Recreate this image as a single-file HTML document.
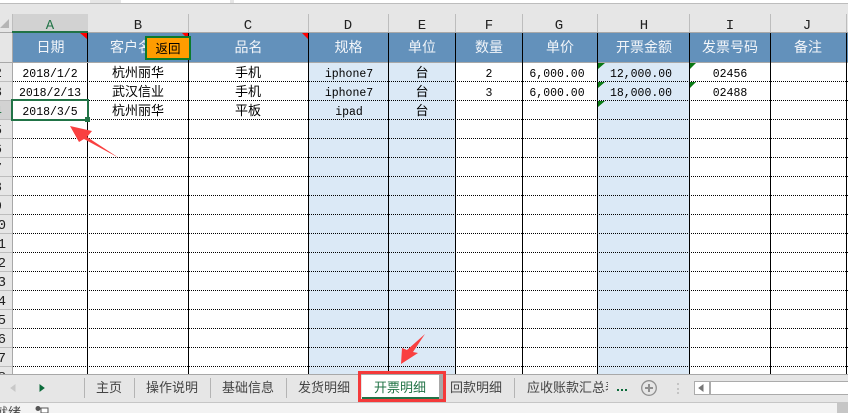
<!DOCTYPE html>
<html><head><meta charset="utf-8">
<style>
html,body{margin:0;padding:0;background:#fff;width:848px;height:413px;overflow:hidden}
svg{display:block}
.m{font-family:"Liberation Mono","WenQuanYi Zen Hei",monospace;font-size:11.5px;fill:#000;text-anchor:middle}
.c{font-family:"Liberation Sans","WenQuanYi Zen Hei","Noto Sans CJK SC",sans-serif;font-size:13px;fill:#000;text-anchor:middle}
.h{font-family:"Liberation Sans","WenQuanYi Zen Hei","Noto Sans CJK SC",sans-serif;font-size:14px;fill:#f2f5f9;text-anchor:middle}
.t{font-family:"Liberation Sans","WenQuanYi Zen Hei","Noto Sans CJK SC",sans-serif;font-size:13px;fill:#444;text-anchor:start}
.l{font-family:"Liberation Mono",monospace;font-size:14px;fill:#222;text-anchor:middle}
.r{font-family:"Liberation Mono",monospace;font-size:14px;fill:#222;text-anchor:end}
</style></head><body>
<svg width="848" height="413" viewBox="0 0 848 413" xmlns="http://www.w3.org/2000/svg" shape-rendering="crispEdges">
<defs><clipPath id="rh"><rect x="0" y="62" width="12" height="312"/></clipPath>
<clipPath id="tabclip"><rect x="510" y="374" width="98" height="28"/></clipPath>
<clipPath id="st"><rect x="0" y="403" width="30" height="10"/></clipPath></defs>
<!-- top strip -->
<rect x="0" y="0" width="848" height="14" fill="#e6e6e6"/>
<rect x="0" y="3" width="848" height="1" fill="#bdbdbd"/>
<rect x="0" y="0" width="90" height="3" fill="#fff"/>
<rect x="121" y="0" width="109" height="3" fill="#fff"/>
<rect x="234" y="0" width="614" height="3" fill="#fff"/>
<!-- col header -->
<rect x="0" y="14" width="848" height="18" fill="#e6e6e6"/>
<rect x="12" y="14" width="76" height="17" fill="#d2d2d2"/>
<polygon points="9,19 9,28 0,28" fill="#b5b5b5" shape-rendering="auto"/>
<g fill="#bdbdbd">
<rect x="12" y="14" width="1" height="18"/><rect x="188" y="14" width="1" height="18"/><rect x="308" y="14" width="1" height="18"/><rect x="388" y="14" width="1" height="18"/><rect x="455" y="14" width="1" height="18"/><rect x="522" y="14" width="1" height="18"/><rect x="597" y="14" width="1" height="18"/><rect x="689" y="14" width="1" height="18"/><rect x="770" y="14" width="1" height="18"/><rect x="846" y="14" width="1" height="18"/>
</g>
<rect x="0" y="32" width="848" height="1" fill="#a8a8a8"/>
<rect x="12" y="31" width="76" height="2" fill="#217346"/>
<text x="50" y="29" class="l" style="fill:#217346">A</text>
<text x="138" y="29" class="l">B</text>
<text x="248" y="29" class="l">C</text>
<text x="348" y="29" class="l">D</text>
<text x="422" y="29" class="l">E</text>
<text x="489" y="29" class="l">F</text>
<text x="559" y="29" class="l">G</text>
<text x="644" y="29" class="l">H</text>
<text x="730" y="29" class="l">I</text>
<text x="807" y="29" class="l">J</text>
<!-- row header -->
<rect x="0" y="33" width="12" height="341" fill="#e6e6e6"/>
<rect x="0" y="100" width="12" height="19" fill="#d2d2d2"/>
<rect x="12" y="33" width="1" height="341" fill="#a8a8a8"/>
<g fill="#bdbdbd">
<rect x="0" y="62" width="12" height="1"/><rect x="0" y="81" width="12" height="1"/><rect x="0" y="100" width="12" height="1"/><rect x="0" y="119" width="12" height="1"/><rect x="0" y="138" width="12" height="1"/><rect x="0" y="157" width="12" height="1"/><rect x="0" y="176" width="12" height="1"/><rect x="0" y="195" width="12" height="1"/><rect x="0" y="214" width="12" height="1"/><rect x="0" y="233" width="12" height="1"/><rect x="0" y="252" width="12" height="1"/><rect x="0" y="271" width="12" height="1"/><rect x="0" y="290" width="12" height="1"/><rect x="0" y="309" width="12" height="1"/><rect x="0" y="328" width="12" height="1"/><rect x="0" y="347" width="12" height="1"/><rect x="0" y="366" width="12" height="1"/>
</g>
<g clip-path="url(#rh)">
<text x="2" y="77" class="r">2</text><text x="2" y="96" class="r">3</text><text x="2" y="115" class="r" style="fill:#217346">4</text><text x="2" y="134" class="r">5</text><text x="2" y="153" class="r">6</text><text x="2" y="172" class="r">7</text><text x="2" y="191" class="r">8</text><text x="2" y="210" class="r">9</text>
<text x="6" y="229" class="r">10</text><text x="6" y="248" class="r">11</text><text x="6" y="267" class="r">12</text><text x="6" y="286" class="r">13</text><text x="6" y="305" class="r">14</text><text x="6" y="324" class="r">15</text><text x="6" y="343" class="r">16</text><text x="6" y="362" class="r">17</text><text x="6" y="381" class="r">18</text>
</g>
<!-- blue fills -->
<rect x="309" y="62" width="146" height="312" fill="#dbe9f6"/>
<rect x="598" y="62" width="91" height="312" fill="#dbe9f6"/>
<!-- header band -->
<rect x="13" y="33" width="835" height="29" fill="#6391bb"/>
<rect x="0" y="62" width="848" height="1" fill="#a8a8a8"/>
<!-- dotted row lines -->
<g stroke="#000" stroke-width="1" stroke-dasharray="1 1" fill="none">
<path d="M13 81.5H848M13 100.5H848M13 119.5H848M13 138.5H848M13 157.5H848M13 176.5H848M13 195.5H848M13 214.5H848M13 233.5H848M13 252.5H848M13 271.5H848M13 290.5H848M13 309.5H848M13 328.5H848M13 347.5H848M13 366.5H848"/>
</g>
<!-- col lines -->
<g fill="#000">
<rect x="87" y="33" width="1" height="341"/><rect x="188" y="33" width="1" height="341"/><rect x="308" y="33" width="1" height="341"/><rect x="388" y="33" width="1" height="341"/><rect x="455" y="33" width="1" height="341"/><rect x="522" y="33" width="1" height="341"/><rect x="597" y="33" width="1" height="341"/><rect x="689" y="33" width="1" height="341"/><rect x="770" y="33" width="1" height="341"/><rect x="846" y="33" width="1" height="341"/>
</g>
<rect x="87" y="62" width="1" height="1" fill="#a8a8a8"/>
<!-- comment markers -->
<g fill="#f00" shape-rendering="auto">
<polygon points="80,33 87,33 87,39"/><polygon points="182,33 188,33 188,39"/><polygon points="302,33 308,33 308,39"/>
</g>
<g fill="#0a7a14" shape-rendering="auto">
<polygon points="598,63 605,63 598,69"/><polygon points="598,82 605,82 598,88"/><polygon points="598,101 605,101 598,107"/>
<polygon points="690,63 696,63 690,69"/><polygon points="690,82 696,82 690,88"/>
</g>
<!-- header text -->
<g shape-rendering="auto">
<text x="50.5" y="52" class="h">日期</text>
<text x="138" y="52" class="h">客户名称</text>
<text x="248.5" y="52" class="h">品名</text>
<text x="348.5" y="52" class="h">规格</text>
<text x="422" y="52" class="h">单位</text>
<text x="489" y="52" class="h">数量</text>
<text x="560" y="52" class="h">单价</text>
<text x="644" y="52" class="h">开票金额</text>
<text x="730" y="52" class="h">发票号码</text>
<text x="808" y="52" class="h">备注</text>
</g>
<!-- button -->
<rect x="146" y="37" width="44" height="22" fill="#ff9c00" stroke="#0b7a2c" stroke-width="2"/>
<text x="168" y="53" class="c" style="font-size:12.5px" shape-rendering="auto">返回</text>
<!-- data -->
<text x="50" y="77" class="m">2018/1/2</text><text x="50" y="96" class="m">2018/2/13</text><text x="50" y="115" class="m">2018/3/5</text>
<text x="138" y="77" class="c">杭州丽华</text><text x="138" y="96" class="c">武汉信业</text><text x="138" y="115" class="c">杭州丽华</text>
<text x="248" y="77" class="c">手机</text><text x="248" y="96" class="c">手机</text><text x="248" y="115" class="c">平板</text>
<text x="349" y="77" class="m">iphone7</text><text x="349" y="96" class="m">iphone7</text><text x="349" y="115" class="m">ipad</text>
<text x="422" y="77" class="c">台</text><text x="422" y="96" class="c">台</text><text x="422" y="115" class="c">台</text>
<text x="489" y="77" class="m">2</text><text x="489" y="96" class="m">3</text>
<text x="557" y="77" class="m">6,000.00</text><text x="557" y="96" class="m">6,000.00</text>
<text x="641" y="77" class="m">12,000.00</text><text x="641" y="96" class="m">18,000.00</text>
<text x="730" y="77" class="m">02456</text><text x="730" y="96" class="m">02488</text>
<!-- selection -->
<rect x="12" y="100" width="76" height="20" fill="none" stroke="#217346" stroke-width="2"/>
<rect x="85" y="117" width="5" height="5" fill="#217346"/>
<!-- arrows -->
<g fill="#f94040" shape-rendering="auto">
<polygon points="70,126 92,131 87,137 119,158 84,139 79,142"/>
<polygon points="425,334 407,350 402,348 401,364 418,353 413,352"/>
</g>
<!-- tab bar -->
<rect x="0" y="374" width="848" height="28" fill="#e6e6e6"/>
<rect x="0" y="374" width="848" height="1" fill="#a8a8a8"/>
<rect x="0" y="402" width="848" height="1" fill="#c6c6c6"/>
<rect x="0" y="403" width="848" height="10" fill="#f3f3f3"/>
<rect x="837" y="403" width="11" height="10" fill="#c6c6c6"/>
<polygon points="11,388 15,385 15,391" fill="#c8c8c8" stroke="#c8c8c8" shape-rendering="auto"/>
<polygon points="40,385 44,388 40,391" fill="#0b6b3a" stroke="#0b6b3a" shape-rendering="auto"/>
<g fill="#b4b4b4"><rect x="84" y="378" width="1" height="20"/><rect x="134" y="378" width="1" height="20"/><rect x="210" y="378" width="1" height="20"/><rect x="286" y="378" width="1" height="20"/><rect x="514" y="378" width="1" height="20"/></g>
<g shape-rendering="auto">
<text x="96" y="392" class="t">主页</text>
<text x="146" y="392" class="t">操作说明</text>
<text x="222" y="392" class="t">基础信息</text>
<text x="298" y="392" class="t">发货明细</text>
</g>
<rect x="362" y="375" width="80" height="25" fill="#fff"/>
<rect x="439" y="375" width="4" height="25" fill="#a8a8a8"/>
<rect x="362" y="397" width="77" height="2" fill="#217346"/>
<rect x="359.5" y="372.5" width="85" height="28" fill="none" stroke="#f43a3a" stroke-width="3"/>
<text x="374" y="392" class="t" style="fill:#217346" shape-rendering="auto">开票明细</text>
<text x="450" y="392" class="t" shape-rendering="auto">回款明细</text>
<g clip-path="url(#tabclip)"><text x="527" y="392" class="t" shape-rendering="auto">应收账款汇总表</text></g>
<g fill="#0b6b3a"><rect x="617" y="389" width="2" height="2"/><rect x="621" y="389" width="2" height="2"/><rect x="625" y="389" width="2" height="2"/></g>
<g shape-rendering="auto" fill="none" stroke="#8f8f8f">
<circle cx="649" cy="388" r="7.3" stroke-width="1.3"/>
<path d="M645 388H653M649 384V392" stroke-width="2"/>
</g>
<g fill="#c4c4c4"><rect x="677" y="383" width="2" height="2"/><rect x="677" y="388" width="2" height="2"/><rect x="677" y="392" width="2" height="2"/></g>
<rect x="694.5" y="381.5" width="154" height="13" fill="#fff" stroke="#ababab"/>
<rect x="709" y="382" width="2" height="13" fill="#ababab"/>
<polygon points="699,388 703,385 703,391" fill="#777" stroke="#777" shape-rendering="auto"/>
<!-- status fragments -->
<g clip-path="url(#st)" shape-rendering="auto">
<text x="8" y="417" class="c" style="font-size:13px;fill:#444">就绪</text>
</g>
<circle cx="38" cy="408.5" r="2.5" fill="#555" shape-rendering="auto"/>
<rect x="41" y="408" width="7" height="5" fill="#fff" stroke="#555"/>
</svg>
</body></html>
